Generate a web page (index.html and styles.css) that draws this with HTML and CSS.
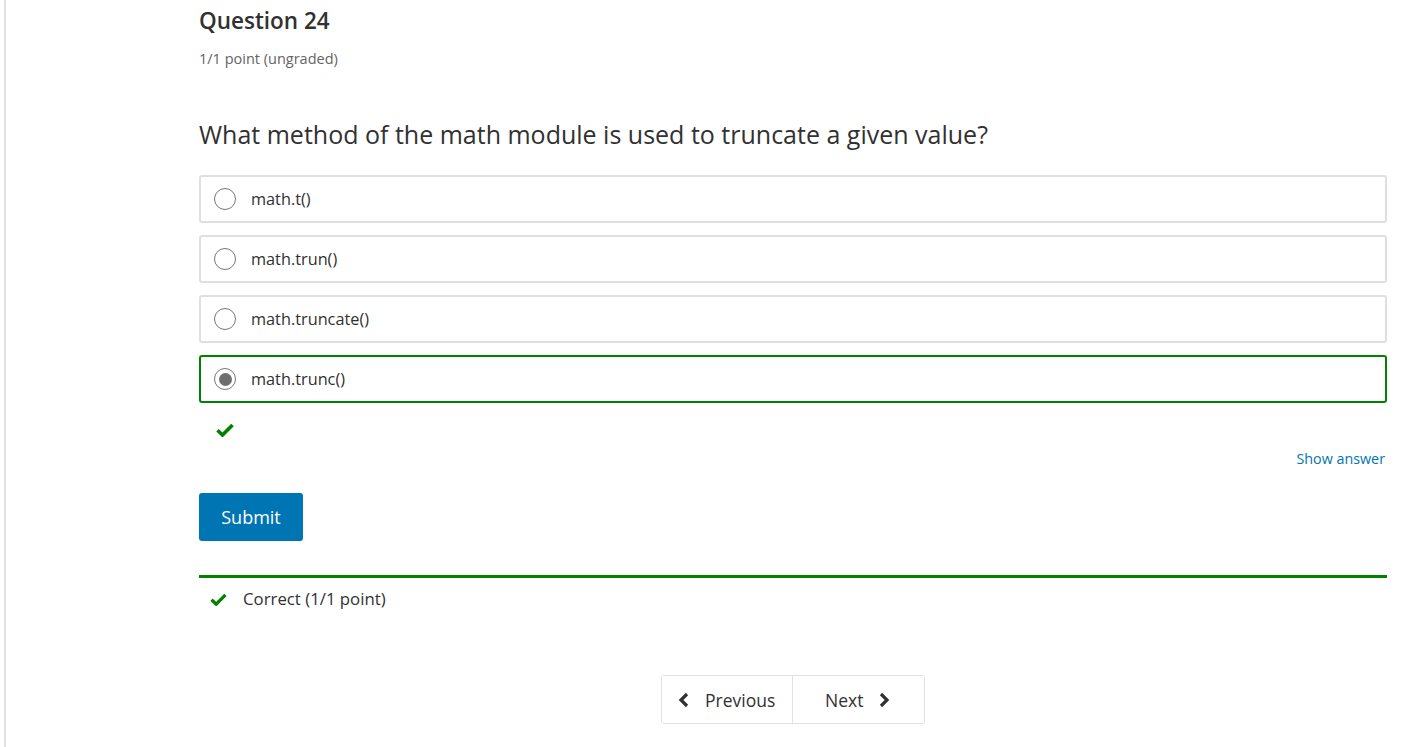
FILE: index.html
```html
<!DOCTYPE html>
<html>
<head>
<meta charset="utf-8">
<link rel="stylesheet" href="styles.css">
</head>
<body>
<div class="frame">
  <div class="content">
    <h3 class="title">Question 24</h3>
    <div class="points">1/1 point (ungraded)</div>
    <p class="prompt">What method of the math module is used to truncate a given value?</p>
    <div class="options">
      <label class="option"><span class="radio"></span><span class="opt-text">math.t()</span></label>
      <label class="option"><span class="radio"></span><span class="opt-text">math.trun()</span></label>
      <label class="option"><span class="radio"></span><span class="opt-text">math.truncate()</span></label>
      <label class="option selected"><span class="radio checked"></span><span class="opt-text">math.trunc()</span></label>
    </div>
    <div class="status-check">
      <svg width="18" height="14" viewBox="0 0 18 14"><path d="M1.5 7.2 L6.5 12 L16.5 2" fill="none" stroke="#008100" stroke-width="3.6"/></svg>
    </div>
    <div class="show-row"><a class="show-answer">Show answer</a></div>
    <button class="submit">Submit</button>
    <div class="notification">
      <svg width="17" height="13" viewBox="0 0 18 14"><path d="M1.5 7.2 L6.5 12 L16.5 2" fill="none" stroke="#008100" stroke-width="3.6"/></svg>
      <span>Correct (1/1 point)</span>
    </div>
    <div class="pager">
      <div class="pager-group">
        <button class="pbtn prev">
          <svg width="12" height="16" viewBox="0 0 12 16"><path d="M9 2 L3 8 L9 14" fill="none" stroke="#313131" stroke-width="3.2"/></svg>
          <span>Previous</span>
        </button>
        <button class="pbtn next">
          <span>Next</span>
          <svg width="12" height="16" viewBox="0 0 12 16"><path d="M3 2 L9 8 L3 14" fill="none" stroke="#313131" stroke-width="3.2"/></svg>
        </button>
      </div>
    </div>
  </div>
</div>
</body>
</html>
```

FILE: styles.css
```css
html, body {
  margin: 0;
  padding: 0;
  background: #fff;
}
body {
  font-family: "Open Sans", "Noto Sans", sans-serif;
  color: #313131;
  height: 747px;
  overflow: hidden;
}
.frame {
  margin-left: 4px;
  border-left: 2px solid #e0e0e0;
  height: 747px;
  box-sizing: border-box;
}
.content {
  padding: 0 16px 0 193px;
}
.title {
  margin: 0;
  padding-top: 7px;
  font-size: 22.5px;
  font-weight: 600;
  line-height: 28px;
  color: #313131;
}
.points {
  margin-top: 15px;
  font-size: 14.5px;
  line-height: 18px;
  color: #646464;
}
.prompt {
  margin: 50px 0 0;
  font-size: 25px;
  line-height: 32px;
  color: #313131;
}
.options {
  margin-top: 25px;
  display: flex;
  flex-direction: column;
  gap: 12px;
}
.option {
  display: flex;
  align-items: center;
  height: 48px;
  box-sizing: border-box;
  border: 2px solid #dfdfdf;
  border-radius: 3px;
  padding-left: 13px;
}
.option.selected {
  border-color: #008100;
}
.radio {
  width: 22px;
  height: 22px;
  box-sizing: border-box;
  border: 1px solid #767676;
  border-radius: 50%;
  display: flex;
  align-items: center;
  justify-content: center;
  flex: none;
}
.radio.checked::after {
  content: "";
  width: 13px;
  height: 13px;
  border-radius: 50%;
  background: #6e6e6e;
}
.opt-text {
  margin-left: 15px;
  font-size: 16.3px;
  color: #313131;
}
.status-check {
  margin-top: 20px;
  padding-left: 17px;
  height: 14px;
  line-height: 0;
}
.show-row {
  display: flex;
  justify-content: flex-end;
  margin-top: 12px;
}
.show-answer {
  font-size: 14.3px;
  line-height: 20px;
  color: #0075b4;
  padding-right: 2px;
}
.submit {
  display: block;
  margin-top: 24px;
  width: 104px;
  height: 48px;
  border: none;
  border-radius: 3px;
  background: #0075b4;
  color: #fff;
  font-family: "Open Sans", "Noto Sans", sans-serif;
  font-size: 18px;
  padding: 0;
}
.notification {
  margin-top: 34px;
  border-top: 3px solid #008100;
  display: flex;
  align-items: center;
  padding: 9px 0 0 11px;
  gap: 16px;
  font-size: 16.8px;
  line-height: 24px;
}
.pager {
  margin-top: 64px;
  display: flex;
  justify-content: center;
}
.pager-group {
  display: flex;
  border: 1px solid #e1e1e1;
  border-radius: 3px;
}
.pbtn {
  height: 47px;
  display: flex;
  align-items: center;
  gap: 15px;
  background: #fff;
  border: none;
  font-family: "Open Sans", "Noto Sans", sans-serif;
  font-size: 17.5px;
  color: #313131;
  padding: 0;
}
.pbtn.prev {
  width: 131px;
  padding-left: 16px;
  border-right: 1px solid #e1e1e1;
}
.pbtn.next {
  width: 131px;
  padding-left: 32px;
}
```
